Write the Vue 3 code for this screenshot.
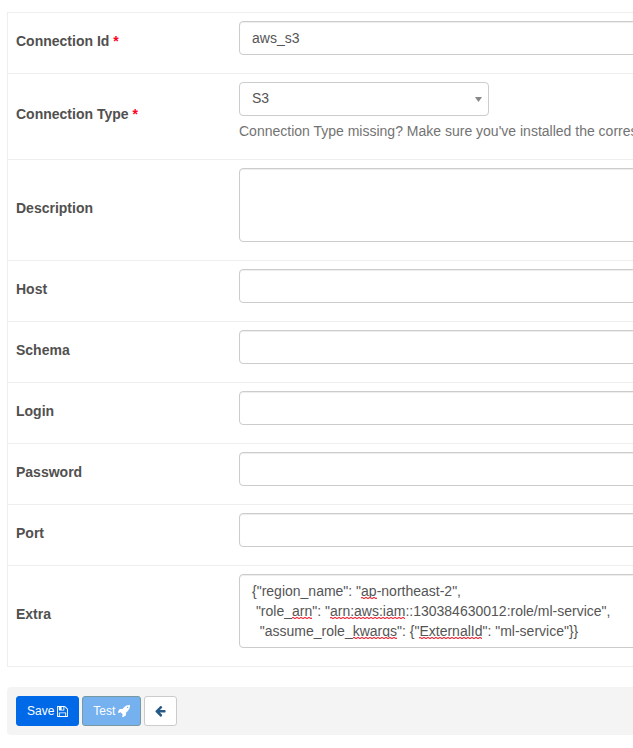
<script setup>
import { reactive, computed } from 'vue'

const fields = [
  { key: 'conn_id', label: 'Connection Id', kind: 'text', required: true },
  { key: 'conn_type', label: 'Connection Type', kind: 'select', required: true },
  { key: 'description', label: 'Description', kind: 'area' },
  { key: 'host', label: 'Host', kind: 'text' },
  { key: 'schema', label: 'Schema', kind: 'text' },
  { key: 'login', label: 'Login', kind: 'text' },
  { key: 'password', label: 'Password', kind: 'password' },
  { key: 'port', label: 'Port', kind: 'text' },
  { key: 'extra', label: 'Extra', kind: 'area' },
]

const form = reactive({
  conn_id: 'aws_s3',
  conn_type: 'S3',
  description: '',
  host: '',
  schema: '',
  login: '',
  password: '',
  port: '',
  extra:
    '{"region_name": "ap-northeast-2",\n "role_arn": "arn:aws:iam::130384630012:role/ml-service",\n  "assume_role_kwargs": {"ExternalId": "ml-service"}}',
})

// Words the spell checker does not know, underlined in the Extra box.
const unknown = /arn:aws:iam|\bap(?=-)|arn(?=")|kwargs|ExternalId/g
const pen = document.createElement('canvas').getContext('2d')
pen.font = '14px "Liberation Sans", Arial, sans-serif'
const widthOf = (text) => Math.round(pen.measureText(text).width)

const marks = computed(() =>
  form.extra.split('\n').flatMap((line, row) =>
    [...line.matchAll(unknown)].map((m) => ({
      left: widthOf(line.slice(0, m.index)),
      top: row * 20,
      width: widthOf(m[0]),
    }))
  )
)
</script>

<template>
  <main class="page">
    <form class="form" @submit.prevent>
      <div class="rows">
        <div v-for="f in fields" :key="f.key" class="row">
          <label class="label" :for="f.key">
            {{ f.label }} <span v-if="f.required" class="star">*</span>
          </label>
          <div class="field">
            <template v-if="f.kind === 'select'">
              <div class="picker">
                <select :id="f.key" v-model="form[f.key]" class="control">
                  <option>S3</option>
                </select>
                <svg class="caret" viewBox="0 0 7 5" aria-hidden="true"><path d="M0 0h7L3.5 5z" /></svg>
              </div>
              <p class="help">Connection Type missing? Make sure you've installed the corresponding Airflow Provider Package.</p>
            </template>
            <div v-else-if="f.kind === 'area'" class="area">
              <textarea :id="f.key" v-model="form[f.key]" class="control" rows="3" spellcheck="false"></textarea>
              <div v-if="f.key === 'extra'" class="marks" aria-hidden="true">
                <i
                  v-for="(m, i) in marks"
                  :key="i"
                  class="mark"
                  :style="{ left: m.left + 'px', top: m.top + 'px', width: m.width + 'px' }"
                ></i>
              </div>
            </div>
            <input v-else :id="f.key" v-model="form[f.key]" class="control" :type="f.kind" />
          </div>
        </div>
      </div>

      <div class="actions">
        <button type="submit" class="btn save">
          Save
          <svg class="icon" viewBox="128 128 1536 1536" aria-hidden="true"><path d="M512 1536h768v-384h-768v384zm896 0h128v-896q0-14-10-38.5t-20-34.5l-281-281q-10-10-34-20t-39-10v416q0 40-28 68t-68 28h-576q-40 0-68-28t-28-68v-416h-128v1280h128v-416q0-40 28-68t68-28h832q40 0 68 28t28 68v416zm-384-928v-320q0-13-9.5-22.5t-22.5-9.5h-192q-13 0-22.5 9.5t-9.5 22.5v320q0 13 9.5 22.5t22.5 9.5h192q13 0 22.5-9.5t9.5-22.5zm640 32v928q0 40-28 68t-68 28h-1344q-40 0-68-28t-28-68v-1344q0-40 28-68t68-28h928q40 0 88 20t76 48l280 280q28 28 48 76t20 88z" /></svg>
        </button>
        <button type="button" class="btn test" disabled>
          Test
          <svg class="icon rocket" viewBox="64 128 1600 1600" aria-hidden="true"><path d="M1440 448q0-40-28-68t-68-28-68 28-28 68 28 68 68 28 68-28 28-68zm224-288q0 249-75.5 430.5t-253.5 360.5q-81 80-195 176l-20 379q-2 16-16 26l-384 224q-7 4-16 4-12 0-23-9l-64-64q-13-14-8-32l85-276-281-281-276 85q-3 1-9 1-14 0-23-9l-64-64q-17-19-5-39l224-384q10-14 26-16l379-20q96-114 176-195 188-187 358-258t431-71q14 0 24 9.5t10 22.5z" /></svg>
        </button>
        <a class="btn back" href="#" aria-label="Back">
          <svg class="icon" viewBox="128 192 1600 1600" aria-hidden="true"><path d="M1664 896v128q0 53-32.5 90.5t-84.5 37.5h-704l293 294q38 36 38 90t-38 90l-75 76q-37 37-90 37-52 0-91-37l-651-652q-37-37-37-90 0-52 37-91l651-650q38-38 91-38 52 0 90 38l75 74q38 38 38 91t-38 91l-293 293h704q52 0 84.5 37.5t32.5 90.5z" /></svg>
        </a>
      </div>
    </form>
  </main>
</template>

<style>
body {
  background: #fff;
}
</style>

<style scoped>
.page,
.page * {
  box-sizing: border-box;
}
.page {
  padding: 12px 0 12px 7px;
  overflow-x: clip;
  font-family: "Liberation Sans", Arial, sans-serif;
  font-size: 14px;
  line-height: 20px;
  color: #51504f;
}
/* The form runs on past the right edge of the window. */
.form {
  margin-right: -40px;
}
.rows {
  border: 1px solid #eee;
}
.row {
  display: grid;
  grid-template-columns: 223px minmax(0, 1fr);
  align-items: center;
  padding: 8px;
}
.row + .row {
  border-top: 1px solid #eee;
}
.label {
  justify-self: start;
  margin-bottom: 5px;
  font-weight: bold;
}
.star {
  color: #ff0022;
}
.field {
  padding-bottom: 10px;
}
.control {
  display: block;
  width: 100%;
  height: 34px;
  margin: 0;
  padding: 6px 12px;
  border: 1px solid #ccc;
  border-radius: 4px;
  outline: 0;
  background: #fff;
  box-shadow: inset 0 1px 1px rgba(0, 0, 0, 0.075);
  color: #555;
  font: inherit;
}
textarea.control {
  height: auto;
  resize: none;
  overflow: hidden;
}
select.control {
  appearance: none;
  box-shadow: none;
  padding: 4px 12px 6px;
}
.picker {
  position: relative;
  width: 250px;
}
.caret {
  position: absolute;
  top: 15px;
  right: 7px;
  width: 7px;
  height: 5px;
  fill: #888;
  pointer-events: none;
}
.help {
  margin: 5px 0 0;
  color: #737373;
  white-space: nowrap;
}
.area {
  position: relative;
}
.marks {
  position: absolute;
  inset: 7px 13px;
  pointer-events: none;
}
.mark {
  position: absolute;
  height: 18px;
  background:
    repeating-linear-gradient(90deg, #f5364a 0 2px, #fbb 2px 4px) 0 16px / 100% 1px no-repeat,
    repeating-linear-gradient(90deg, #fbb 0 2px, #f5364a 2px 4px) 0 17px / 100% 1px no-repeat;
}
.actions {
  display: flex;
  gap: 3px;
  margin-top: 20px;
  padding: 9px;
  border-radius: 4px;
  background: #f4f4f4;
}
.btn {
  display: flex;
  align-items: center;
  gap: 3px;
  height: 30px;
  padding: 0 10px;
  border: 1px solid #ccc;
  border-radius: 3px;
  background: #fff;
  font-family: inherit;
  font-size: 12px;
  line-height: 18px;
  text-decoration: none;
  color: #fff;
}
.save {
  border-color: #0069e8;
  background: #0069e8;
}
.test {
  border-color: #7799a2;
  background: #74b1ee;
}
.back {
  color: #285a88;
}
.icon {
  width: 11px;
  height: 11px;
  fill: currentColor;
}
.rocket {
  width: 12px;
  height: 12px;
}
</style>
